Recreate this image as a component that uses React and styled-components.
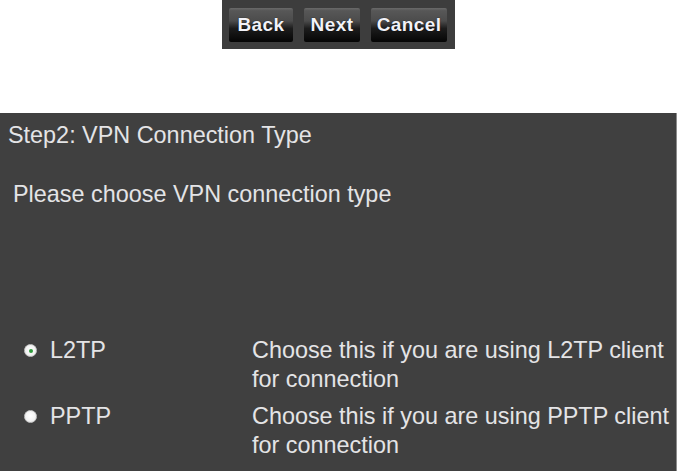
import React from "react";
import styled, { createGlobalStyle } from "styled-components";

const GlobalStyle = createGlobalStyle`
  html, body {
    margin: 0;
    padding: 0;
    background: #ffffff;
  }
  body {
    font-family: "Liberation Sans", Arial, sans-serif;
    overflow: hidden;
  }
`;

const Page = styled.div`
  width: 677px;
  height: 471px;
  display: flex;
  flex-direction: column;
`;

const ToolbarRow = styled.div`
  display: flex;
  justify-content: center;
`;

const ButtonBar = styled.div`
  height: 49px;
  background: #3d3d3d;
  display: flex;
  align-items: center;
  gap: 11px;
  padding: 0 8px 0 7px;
  box-sizing: border-box;
`;

const WizardButton = styled.button`
  width: ${(p) => p.$w}px;
  height: 34px;
  border: none;
  border-radius: 2px;
  padding: 0;
  margin: 0;
  background: linear-gradient(
    to bottom,
    #6a6a6a 0%,
    #575757 8%,
    #4c4c4c 38%,
    #1c1c1c 60%,
    #050505 100%
  );
  color: #f2f2f8;
  font-family: "Liberation Sans", Arial, sans-serif;
  font-weight: bold;
  font-size: 19px;
  letter-spacing: 0.4px;
  text-shadow: 0 0 1px #000;
  display: flex;
  align-items: center;
  justify-content: center;
  cursor: pointer;
`;

const Panel = styled.div`
  margin-top: 64px;
  flex: 1;
  width: 677px;
  box-sizing: border-box;
  background: #404040;
  border-right: 1px solid #8c8c8c;
  padding: 8px 0 0 8px;
  color: #e4e4e6;
  font-size: 23.4px;
`;

const Title = styled.div`
  line-height: 28px;
  white-space: nowrap;
`;

const Prompt = styled.div`
  margin-top: 31px;
  padding-left: 5px;
  line-height: 28px;
  white-space: nowrap;
`;

const OptionList = styled.div`
  margin-top: 128px;
  display: flex;
  flex-direction: column;
  gap: 8px;
`;

const OptionRow = styled.label`
  display: grid;
  grid-template-columns: 42px 202px 424px;
  line-height: 29px;
  cursor: pointer;
`;

const RadioCell = styled.div`
  display: flex;
  justify-content: flex-start;
  padding-left: 16px;
  padding-top: 8px;
`;

const RadioDot = styled.span`
  width: 13px;
  height: 13px;
  box-sizing: border-box;
  border-radius: 50%;
  background: radial-gradient(circle at 50% 45%, #ffffff 0%, #f2f2f2 60%, #d8d8d8 100%);
  border: 1px solid #c8c8c8;
  display: flex;
  align-items: center;
  justify-content: center;
  &::after {
    content: "";
    width: 4px;
    height: 4px;
    border-radius: 50%;
    background: ${(p) => (p.$checked ? "#2f9a3c" : "transparent")};
  }
`;

const OptionLabel = styled.div`
  white-space: nowrap;
`;

const OptionDesc = styled.div``;

const options = [
  {
    id: "l2tp",
    label: "L2TP",
    desc: "Choose this if you are using L2TP client for connection",
    checked: true,
  },
  {
    id: "pptp",
    label: "PPTP",
    desc: "Choose this if you are using PPTP client for connection",
    checked: false,
  },
];

export default function App() {
  return (
    <>
      <GlobalStyle />
      <Page>
        <ToolbarRow>
          <ButtonBar>
            <WizardButton $w={64}>Back</WizardButton>
            <WizardButton $w={56}>Next</WizardButton>
            <WizardButton $w={76}>Cancel</WizardButton>
          </ButtonBar>
        </ToolbarRow>
        <Panel>
          <Title>Step2: VPN Connection Type</Title>
          <Prompt>Please choose VPN connection type</Prompt>
          <OptionList>
            {options.map((o) => (
              <OptionRow key={o.id}>
                <RadioCell>
                  <RadioDot $checked={o.checked} />
                </RadioCell>
                <OptionLabel>{o.label}</OptionLabel>
                <OptionDesc>{o.desc}</OptionDesc>
              </OptionRow>
            ))}
          </OptionList>
        </Panel>
      </Page>
    </>
  );
}
